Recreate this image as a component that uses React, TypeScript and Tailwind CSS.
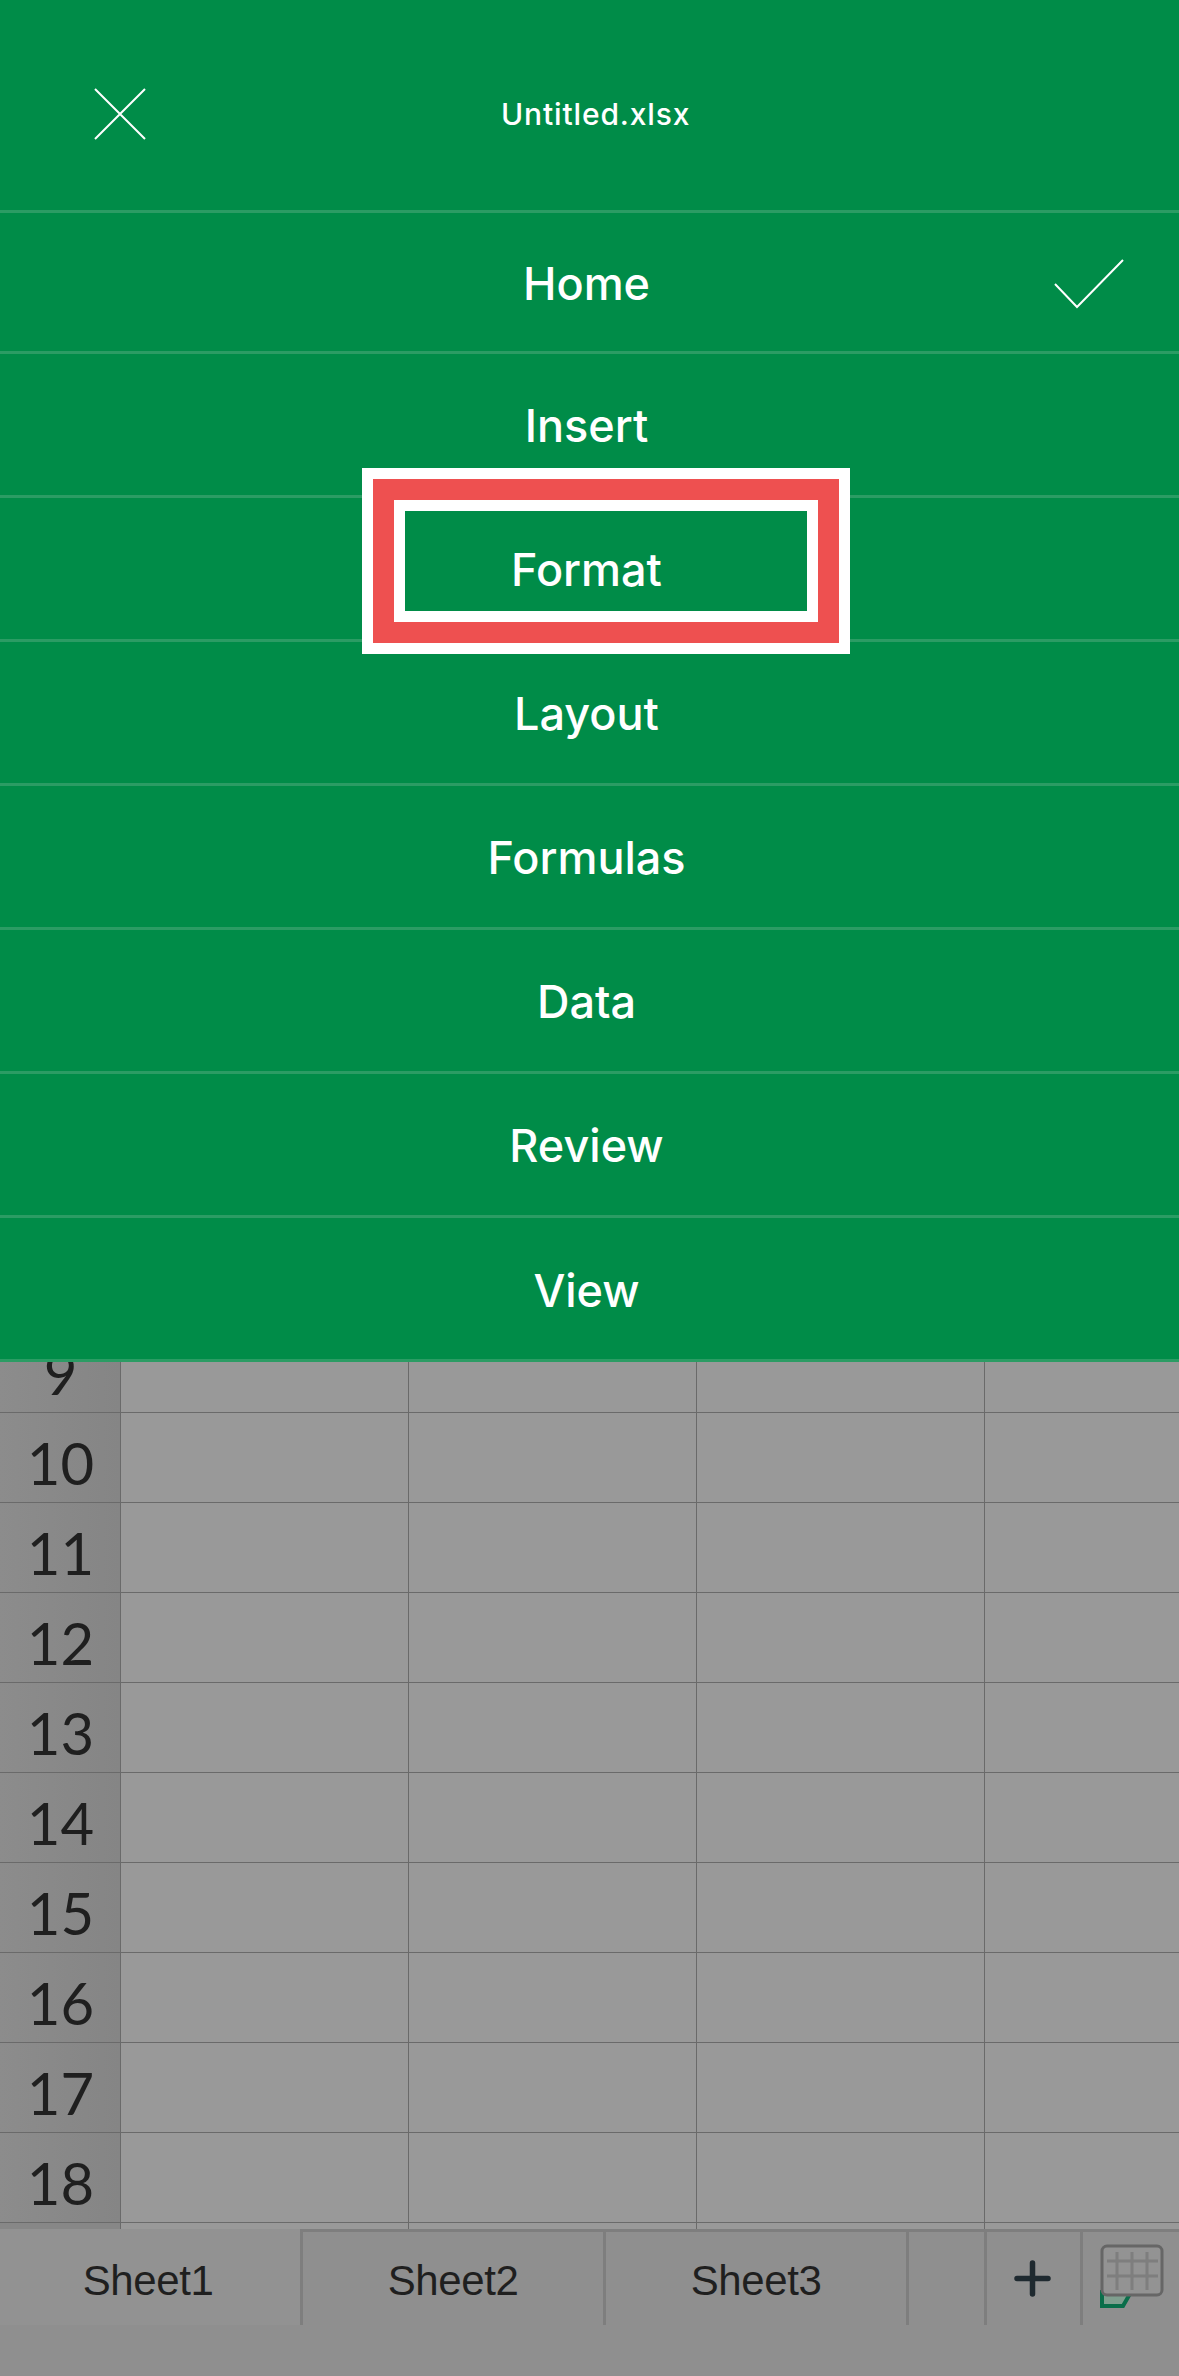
const menuItems = ['Home', 'Insert', 'Format', 'Layout', 'Formulas', 'Data', 'Review', 'View'];
const rows = [10, 11, 12, 13, 14, 15, 16, 17, 18];
const sheets = ['Sheet1', 'Sheet2', 'Sheet3'];

function CloseIcon() {
  return (
    <svg width="52" height="52" viewBox="0 0 52 52" className="shrink-0" fill="none" stroke="white" strokeWidth="2">
      <path d="M1 1 L51 51 M51 1 L1 51" />
    </svg>
  );
}

function CheckIcon() {
  return (
    <svg width="70" height="50" viewBox="0 0 70 50" fill="none" stroke="white" strokeWidth="2" className="absolute right-[55px] top-[46px]">
      <path d="M1 25 L23 48 L69 1" />
    </svg>
  );
}

function Row({ label, short }: { label?: number; short?: boolean }) {
  return (
    <div className={`flex border-b border-[#6a6a6a] ${short ? 'h-[51px] items-end' : 'h-[90px]'}`}>
      <div className={`w-[121px] shrink-0 border-r border-[#6a6a6a] bg-linear-to-r from-[#8c8c8c] to-[#858585] flex justify-center pl-[1px] ${short ? 'h-[50px] items-end overflow-hidden' : 'h-[89px] items-center'}`}>
        <span className={`font-['Lato',sans-serif] text-[58px] leading-[89px] text-[#1f1f1f] block ${short ? 'h-[89px] shrink-0 -mb-[1px] pt-[4px]' : 'pt-[10px]'}`}>
          {label}
        </span>
      </div>
      <div className="w-[288px] self-stretch border-r border-[#6a6a6a]" />
      <div className="w-[288px] self-stretch border-r border-[#6a6a6a]" />
      <div className="w-[288px] self-stretch border-r border-[#6a6a6a]" />
    </div>
  );
}

function GridIcon() {
  return (
    <svg width="68" height="66" viewBox="0 0 68 66" fill="none">
      <path d="M2 48 H31 L23 62 H2 Z" fill="#7f9f8f" stroke="#0a6e4a" strokeWidth="4" />
      <rect x="2" y="2" width="60" height="49" rx="5" fill="#939393" stroke="#666666" strokeWidth="3" />
      <path d="M7 17 H58 M7 32 H58 M17 8 V46 M32 8 V46 M47 8 V46" stroke="#7e7e7e" strokeWidth="3" />
    </svg>
  );
}

export default function App() {
  return (
    <div className="w-[1179px] h-[2376px] overflow-hidden bg-[#999999] relative font-['Inter',sans-serif]">
      {/* Menu sheet */}
      <div className="bg-[#008c48] text-white">
        <div className="h-[210px] flex items-center pl-[94px] pt-[18px]">
          <CloseIcon />
          <span className="ml-[355px] text-[30px] font-medium tracking-[0.85px] leading-none">Untitled.xlsx</span>
        </div>
        {menuItems.map((item, i) => (
          <div
            key={item}
            className={`relative border-t-[3px] border-[#2b9c64] flex items-center justify-center pr-[6px] pt-[3px] text-[45px] font-medium ${i === 0 ? 'h-[141px]' : i === 7 ? 'h-[145px]' : 'h-[144px]'}`}
          >
            {item}
            {i === 0 && <CheckIcon />}
          </div>
        ))}
        <div className="h-[3px] bg-[#2b9c64] -mt-[1px]" />
      </div>

      {/* Sheet behind the dim */}
      <Row label={9} short />
      {rows.map((r) => (
        <Row key={r} label={r} />
      ))}
      <div className="flex h-[6px]">
        <div className="w-[121px] border-r border-[#6a6a6a] bg-[#878787]" />
        <div className="w-[288px] border-r border-[#6a6a6a]" />
        <div className="w-[288px] border-r border-[#6a6a6a]" />
        <div className="w-[288px] border-r border-[#6a6a6a]" />
      </div>

      {/* Tabs */}
      <div className="h-[96px] flex bg-[#8f8f8f] font-['Liberation_Sans',sans-serif] text-[42px] tracking-[-0.4px] text-[#1f1f1f]">
        <div className="w-[300px] h-full bg-[#929292] flex items-center justify-center pr-[4px] pt-[6px]">{sheets[0]}</div>
        <div className="flex-1 flex border-t-[3px] border-[#7e7e7e]">
          <div className="w-[303px] border-l-[3px] border-[#7e7e7e] flex items-center justify-center pt-[3px]">{sheets[1]}</div>
          <div className="w-[303px] border-l-[3px] border-[#7e7e7e] flex items-center justify-center pt-[3px]">{sheets[2]}</div>
          <div className="w-[78px] border-l-[3px] border-[#7e7e7e]" />
          <div className="w-[96px] border-l-[3px] border-[#7e7e7e] flex items-center justify-center pr-[3px]">
            <svg width="37" height="37" viewBox="0 0 37 37" fill="none" stroke="#1f2a30" strokeWidth="5.5" strokeLinecap="round">
              <path d="M18.5 3 V34 M3 18.5 H34" />
            </svg>
          </div>
          <div className="flex-1 border-l-[3px] border-[#7e7e7e] pl-[17px] pt-[12px]">
            <GridIcon />
          </div>
        </div>
      </div>
      <div className="h-[51px] bg-[#8f8f8f]" />

      {/* Annotation over the Format row */}
      <div className="absolute left-[362px] top-[468px] w-[488px] h-[186px] border-[11px] border-white">
        <div className="w-full h-full border-[21px] border-[#ee5050]">
          <div className="w-full h-full border-[11px] border-white" />
        </div>
      </div>
    </div>
  );
}
